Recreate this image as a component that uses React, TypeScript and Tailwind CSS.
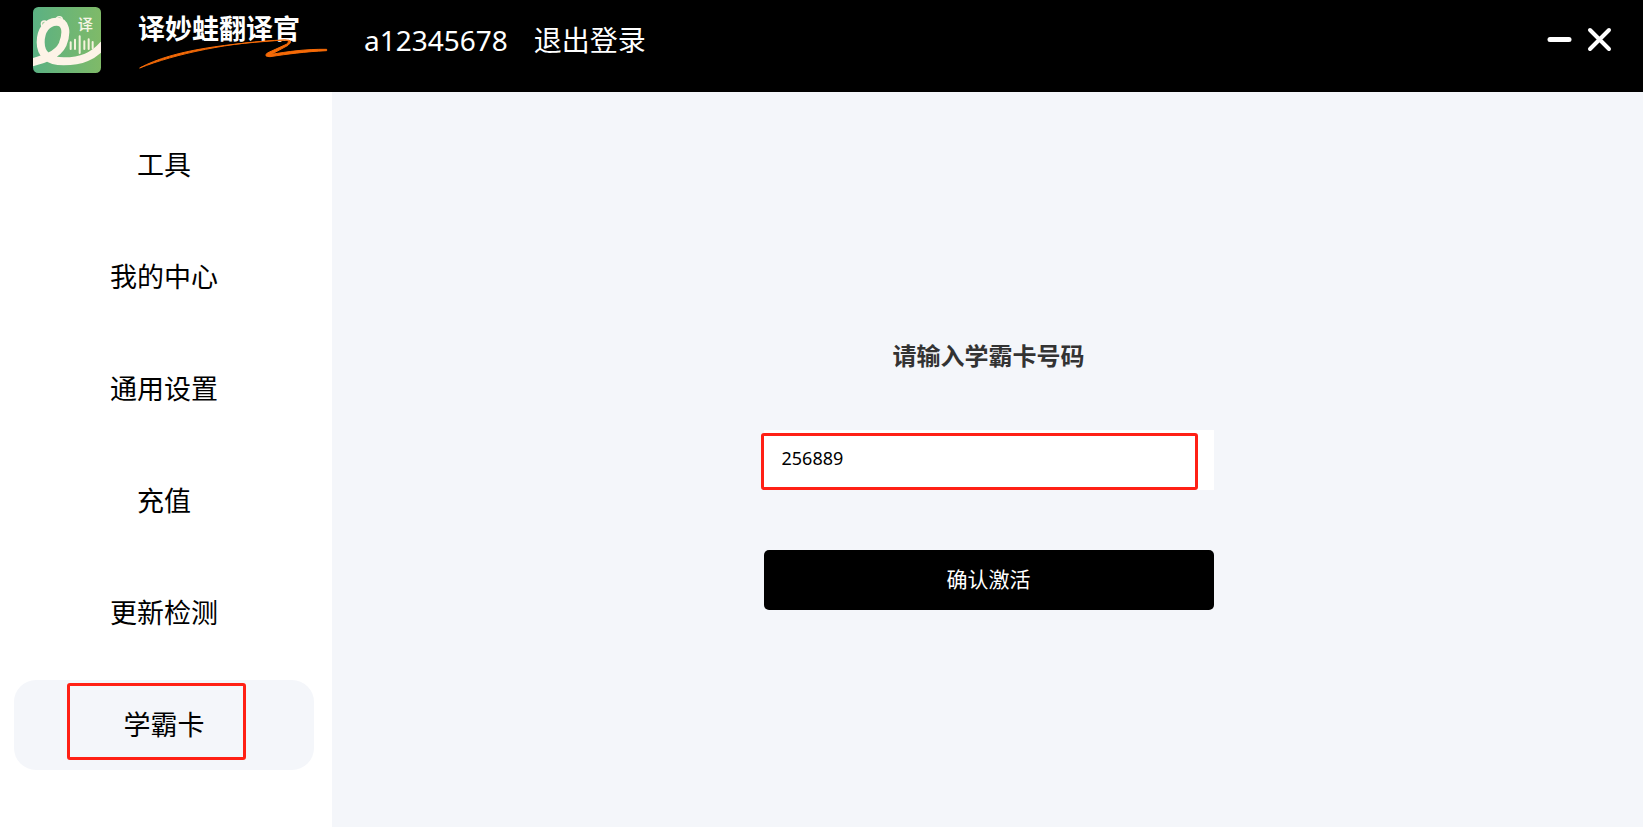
import { useState } from 'react';
import clsx from 'clsx';

const menuItems = ['工具', '我的中心', '通用设置', '充值', '更新检测', '学霸卡'];

function Logo() {
  return (
    <svg viewBox="0 0 204 198" className="w-[68px] h-[66px] shrink-0" aria-hidden="true">
      <defs>
        <linearGradient id="logo-bg" x1="0" y1="0" x2="1" y2="0">
          <stop offset="0" stopColor="#5bb183" />
          <stop offset="1" stopColor="#7fba68" />
        </linearGradient>
        <clipPath id="logo-clip">
          <rect width="204" height="198" rx="16" />
        </clipPath>
      </defs>
      <g clipPath="url(#logo-clip)">
        <rect width="204" height="198" fill="url(#logo-bg)" />
        <circle cx="34" cy="51" r="9" fill="#a5cfa3" stroke="#fdf3e7" strokeWidth="4" />
        <circle cx="79" cy="38" r="9" fill="#a5cfa3" stroke="#fdf3e7" strokeWidth="4" />
        <path
          d="M-6 167 C34 156 74 144 89 112 C104 74 98 43 70 44 C42 45 23 70 23 106 C23 142 46 163 92 163 C146 163 180 148 212 112"
          fill="none"
          stroke="#fdf3e7"
          strokeWidth="24"
        />
        <path
          d="M113 106V126 M126 98V126 M140 88V138 M154 103V126 M167 97V126 M179 105V124"
          stroke="#f4f3dc"
          strokeWidth="6"
          strokeLinecap="round"
        />
        <text x="134" y="70" fontSize="46" fill="#f6f5e4" className="font-medium">
          译
        </text>
      </g>
    </svg>
  );
}

function Brand() {
  return (
    <div className="relative ml-[37px] h-[66px] w-[190px]">
      <span className="block text-[27px] leading-[44px] font-bold whitespace-nowrap">译妙蛙翻译官</span>
      <svg viewBox="0 0 570 90" className="absolute left-0 top-[32px] w-[190px] h-[30px]" aria-hidden="true">
        <path
          d="M5 87 C110 30 280 14 440 3 Q460 5 445 16 L388 42 Q376 53 396 53 C450 45 500 38 566 35 L566 31 C500 30 450 38 400 46 L450 19 Q470 2 440 3 C280 8 110 45 5 87Z"
          fill="#f56a07"
          stroke="#f56a07"
          strokeWidth="3"
          strokeLinejoin="round"
        />
      </svg>
    </div>
  );
}

export default function App() {
  const [active, setActive] = useState('学霸卡');
  const [cardNumber, setCardNumber] = useState('256889');

  return (
    <div className="min-h-screen flex flex-col bg-[#f4f6fa] text-black font-['Noto_Sans','Noto_Sans_CJK_SC',sans-serif]">
      <header className="h-[92px] shrink-0 flex items-start bg-black text-white pl-[33px] pr-7 pt-[7px]">
        <Logo />
        <Brand />
        <div className="flex items-center gap-[26px] ml-9 h-[66px] text-[28px]">
          <span>a12345678</span>
          <button type="button">退出登录</button>
        </div>
        <div className="ml-auto flex items-center gap-2 h-[66px]">
          <button type="button" aria-label="最小化">
            <svg viewBox="0 0 32 32" className="w-8 h-8" stroke="currentColor" strokeWidth="5" strokeLinecap="round">
              <path d="M7 15.5H26" />
            </svg>
          </button>
          <button type="button" aria-label="关闭">
            <svg viewBox="0 0 32 32" className="w-8 h-8" stroke="currentColor" strokeWidth="4" strokeLinecap="round">
              <path d="M7 6L26 25M26 6L7 25" />
            </svg>
          </button>
        </div>
      </header>

      <div className="flex flex-1">
        <nav className="w-[332px] shrink-0 flex flex-col gap-[22px] bg-white pt-7 pb-10 pl-[14px] pr-[18px]">
          {menuItems.map((item) => (
            <button
              key={item}
              type="button"
              onClick={() => setActive(item)}
              className={clsx(
                'relative h-[90px] rounded-[22px] text-[27px]',
                active === item && 'bg-[#f4f6fa]'
              )}
            >
              {item}
              {item === '学霸卡' && (
                <span className="absolute left-[53px] top-[3px] w-[179px] h-[77px] border-3 border-[#ff2015] rounded-[3px]" />
              )}
            </button>
          ))}
        </nav>

        <main className="flex-1 flex flex-col items-center pt-[246px] pl-0.5">
          <form className="w-[450px] flex flex-col" onSubmit={(e) => e.preventDefault()}>
            <label htmlFor="card-number" className="text-center text-2xl leading-9 font-bold text-[#333]">
              请输入学霸卡号码
            </label>
            <div className="relative mt-14">
              <input
                id="card-number"
                type="text"
                value={cardNumber}
                onChange={(e) => setCardNumber(e.target.value)}
                className="block w-full h-[60px] bg-white pl-[18px] pr-5 pb-1 text-lg focus:outline-none"
              />
              <span className="pointer-events-none absolute -left-[3px] top-[3px] w-[437px] h-[57px] border-3 border-[#ff2015] rounded-[3px]" />
            </div>
            <button type="submit" className="mt-[60px] h-[60px] rounded-[5px] bg-black text-white text-[21px]">
              确认激活
            </button>
          </form>
        </main>
      </div>
    </div>
  );
}
